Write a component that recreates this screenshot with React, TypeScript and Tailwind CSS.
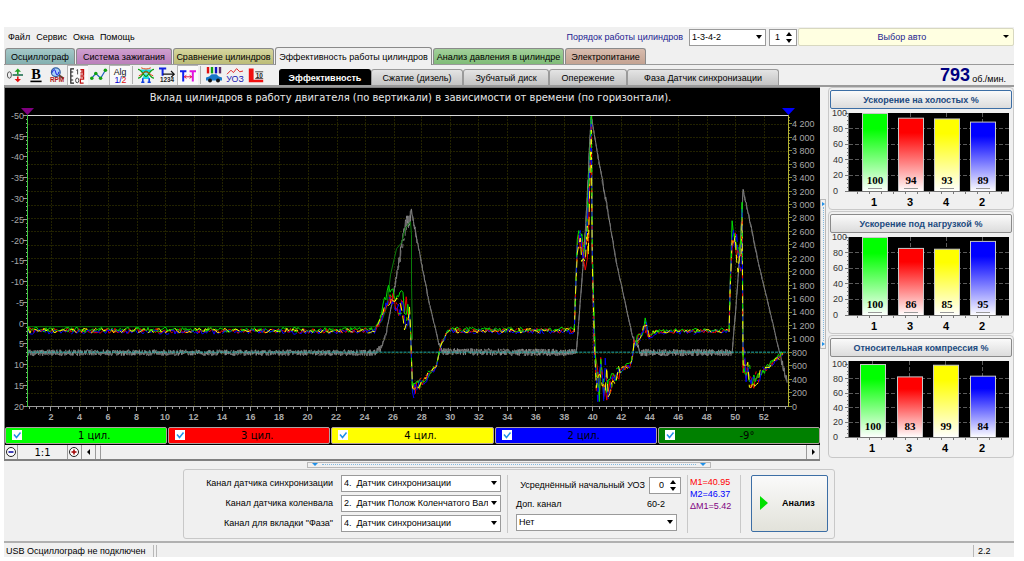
import { useState } from "react";
import type { ReactNode } from "react";

type Point = [number, number];

// Small deterministic generator, so that the traces are the same on each render
const makeRandom = (seed: number) => {
  let s = seed;
  return () => {
    s = (s * 16807) % 2147483647;
    return s / 2147483647 - 0.5;
  };
};

// Each knot: x, y and the noise amplitude of the stretch that follows it
type Knot = [number, number, number];

const trace = (knots: Knot[], seed: number, step: number) => {
  const random = makeRandom(seed);
  const points: Point[] = [];
  for (let i = 0; i < knots.length - 1; i++) {
    const [x0, y0, noise] = knots[i];
    const [x1, y1] = knots[i + 1];
    const count = Math.max(1, Math.round((x1 - x0) / step));
    for (let k = 0; k < count; k++) {
      const f = k / count;
      const y = y0 + (y1 - y0) * f + random() * noise;
      points.push([x0 + (x1 - x0) * f, Math.min(406, Math.max(116, y))]);
    }
  }
  const last = knots[knots.length - 1];
  points.push([last[0], last[1]]);
  return points.map(([x, y]) => `${x.toFixed(1)},${y.toFixed(1)}`).join(" ");
};

const cylinderKnots: Knot[] = [
  [27, 331, 5],
  [374, 331, 4],
  [378, 324, 6],
  [384, 310, 10],
  [388, 300, 12],
  [391, 299, 14],
  [398, 307, 20],
  [404, 314, 34],
  [409, 314, 40],
  [410, 330, 4],
  [411, 360, 4],
  [412, 390, 18],
  [416, 388, 12],
  [422, 382, 8],
  [429, 374, 5],
  [436, 366, 2],
  [440, 347, 8],
  [444, 340, 4],
  [447, 331, 5],
  [574, 331, 2],
  [575, 300, 6],
  [577, 238, 12],
  [580, 232, 20],
  [583, 246, 24],
  [585, 256, 30],
  [587, 236, 60],
  [588, 220, 60],
  [590, 150, 6],
  [591, 116, 0],
  [592, 250, 10],
  [594, 345, 40],
  [596, 382, 50],
  [602, 380, 50],
  [605, 376, 40],
  [608, 390, 18],
  [613, 380, 14],
  [620, 371, 6],
  [631, 364, 4],
  [634, 345, 12],
  [640, 337, 8],
  [645, 326, 16],
  [649, 336, 5],
  [656, 332, 4],
  [729, 331, 2],
  [730, 290, 8],
  [732, 234, 20],
  [735, 232, 24],
  [738, 250, 30],
  [741, 250, 40],
  [742, 205, 4],
  [743, 365, 40],
  [746, 368, 28],
  [751, 382, 18],
  [758, 378, 12],
  [766, 369, 5],
  [783, 354, 0],
];

const shifted = (dy: number, peak: number): Knot[] =>
  cylinderKnots.map(([x, y, n]) => [x, y < 270 ? y + peak : y + dy, n]);

// The first cylinder runs ahead of the others on the slow acceleration
const firstCylinder = shifted(-1, -4).map(([x, y, n]): Knot => [
  x,
  x > 380 && x < 409 ? y - 9 : y,
  n,
]);

const rpmKnots: Knot[] = [
  [27, 353, 6],
  [376, 353, 7],
  [381, 347, 4],
  [386, 332, 3],
  [392, 300, 6],
  [398, 265, 16],
  [404, 232, 18],
  [408, 218, 20],
  [411, 212, 6],
  [418, 248, 4],
  [428, 300, 2],
  [438, 342, 5],
  [442, 352, 7],
  [576, 353, 2],
  [579, 315, 2],
  [583, 262, 12],
  [587, 200, 12],
  [589, 150, 2],
  [591, 116, 2],
  [598, 158, 6],
  [607, 208, 4],
  [616, 262, 2],
  [633, 340, 8],
  [641, 353, 7],
  [732, 353, 2],
  [736, 305, 2],
  [740, 250, 3],
  [743, 190, 4],
  [750, 222, 4],
  [758, 262, 2],
  [770, 312, 2],
  [780, 355, 8],
  [787, 383, 0],
];

const advancePoints =
  "27,327 374,327 381,322 386,308 390,275 396,249 401,243 405,228 410,222 411,235 411,283 412,340";

const traces = [
  { color: "#8c8c8c", dash: "none", points: trace(rpmKnots, 77, 0.5) },
  { color: "#6c6c6c", dash: "6 3", points: trace(rpmKnots, 91, 0.6) },
  { color: "#0a7b0a", dash: "none", points: advancePoints },
  { color: "#f00000", dash: "none", points: trace(shifted(0, 6), 11, 1.5) },
  { color: "#00e000", dash: "none", points: trace(firstCylinder, 23, 1.5) },
  { color: "#0000ff", dash: "14 3", points: trace(shifted(1, 4), 37, 1.5) },
  { color: "#ffff00", dash: "8 5", points: trace(shifted(0, 14), 53, 2) },
  { color: "#f00000", dash: "3 15", points: trace(shifted(0, 8), 61, 2) },
  { color: "#00e000", dash: "4 20", points: trace(shifted(-1, -2), 67, 2) },
];

const range = (n: number) => Array.from({ length: n }, (_, i) => i);

const TimeChart = () => (
  <svg viewBox="4 88 816 339" className="block w-full bg-black">
    <text
      x="410"
      y="101"
      fontSize="10"
      fill="#e8e8e8"
      textAnchor="middle"
      className="font-['DejaVu_Sans',Verdana,sans-serif]"
    >
      Вклад цилиндров в работу двигателя (по вертикали) в зависимости от времени
      (по горизонтали).
    </text>
    <g stroke="#222200" strokeDasharray="2 1" shapeRendering="crispEdges">
      {range(26).map((i) => {
        const x = Math.round(50 + i * 28.55) + 0.5;
        return <line key={i} x1={x} x2={x} y1="116" y2="406" />;
      })}
      {range(21).map((i) => {
        const y = Math.round(393 - i * 13.46) + 0.5;
        return <line key={i} x1="27" x2="788" y1={y} y2={y} />;
      })}
    </g>
    <g fill="none" strokeWidth="1" strokeLinejoin="bevel">
      {traces.map((t, i) => (
        <polyline
          key={i}
          points={t.points}
          stroke={t.color}
          strokeDasharray={t.dash}
        />
      ))}
    </g>
    <line
      x1="27"
      x2="788"
      y1="352.5"
      y2="352.5"
      stroke="#20b2aa"
      strokeDasharray="3 1"
    />
    <g shapeRendering="crispEdges" stroke="#9a9a9a">
      <line x1="27" x2="788" y1="115.5" y2="115.5" stroke="#d8d8d8" />
      <line x1="27" x2="788" y1="406.5" y2="406.5" />
      {range(71).map((i) => (
        <line
          key={i}
          x1={i % 5 === 0 ? 22 : 25}
          x2="26"
          y1={115.5 + i * 4.157}
          y2={115.5 + i * 4.157}
        />
      ))}
      {range(107).map((i) => (
        <line
          key={i}
          y1="407"
          y2={i % 4 === 3 ? 411 : 409}
          x1={28.6 + i * 7.137}
          x2={28.6 + i * 7.137}
        />
      ))}
      {range(87).map((i) => (
        <line
          key={i}
          x1="788"
          x2={i % 4 === 0 ? 792 : 790}
          y1={406.5 - i * 3.365}
          y2={406.5 - i * 3.365}
          stroke="#8a8a30"
        />
      ))}
      <line x1="26.5" x2="26.5" y1="115" y2="407" stroke="#3cc83c" />
      <line x1="788.5" x2="788.5" y1="115" y2="407" stroke="#b4b432" />
    </g>
    <polygon points="20,108 33,108 26.5,115" fill="#800080" />
    <polygon points="782,108 795,108 788.5,115" fill="#0000ff" />
    <g fontSize="9" fill="#a8a8a8">
      {range(15).map((i) => (
        <text key={i} x="23" y={119 + i * 20.79} textAnchor="end">
          {i * 5 - 50}
        </text>
      ))}
      {range(22).map((i) => (
        <text key={i} x="792" y={410 - i * 13.46}>
          {i < 5
            ? i * 200
            : `${Math.floor(i / 5)} ${String((i % 5) * 200).padStart(3, "0")}`}
        </text>
      ))}
      {range(26).map((i) => (
        <text
          key={i}
          x={50 + i * 28.55}
          y="420"
          textAnchor="middle"
          fontWeight="bold"
        >
          {i * 2 + 2}
        </text>
      ))}
    </g>
  </svg>
);

type BarChartProps = {
  id: string;
  title: string;
  values: number[];
  top: number;
  zero: number;
  bars: number[];
  active?: boolean;
};

const barColors = ["#00ff00", "#ff0000", "#ffff00", "#0000ff"];
const cylinderOrder = [1, 3, 4, 2];

const BarChart = ({
  id,
  title,
  values,
  top,
  zero,
  bars,
  active,
}: BarChartProps) => {
  const scale = (v: number) => zero - ((zero - top) * v) / 100;
  return (
    <section className="rounded-sm border border-[#c8c8c8] px-px pt-0.5">
      <button
        className={`block h-[19px] w-full rounded-xs border bg-linear-to-b from-[#fafafa] to-[#dcdcdc] font-bold leading-4 text-[#1c4a80] ${
          active ? "border-[#3c6ea5]" : "border-[#8a8a8a]"
        }`}
      >
        {title}
      </button>
      <svg viewBox="830 0 182 100" className="block w-full">
        <defs>
          {barColors.map((color, i) => (
            <linearGradient key={color} id={`${id}-${i}`} x2="0" y2="1">
              <stop offset="0.2" stopColor={color} />
              <stop offset="1" stopColor="#ffffff" />
            </linearGradient>
          ))}
        </defs>
        <rect x="849" y="4" width="160" height={zero - 4} fill="#000" />
        <g stroke="#5a5a5a" strokeDasharray="4 2" shapeRendering="crispEdges">
          {[20, 40, 60, 80].map((v) => (
            <line key={v} x1="849" x2="1009" y1={scale(v)} y2={scale(v)} />
          ))}
          {bars.map((x) => (
            <line key={x} x1={x + 12.5} x2={x + 12.5} y1="4" y2={zero} />
          ))}
        </g>
        {bars.map((x, i) => (
          <g key={x}>
            <rect
              x={x + 0.5}
              y={scale(values[i]) + 0.5}
              width="25"
              height={zero - scale(values[i])}
              fill={`url(#${id}-${i})`}
              stroke="#c8c8c8"
            />
            <text
              x={x + 13}
              y={zero - 7}
              fontSize="11"
              fontWeight="bold"
              textAnchor="middle"
              className="font-['Liberation_Serif',serif]"
            >
              {values[i]}
            </text>
            <text
              x={x + 12}
              y={zero + 15}
              fontSize="11"
              fontWeight="bold"
              textAnchor="middle"
            >
              {cylinderOrder[i]}
            </text>
            {top === 4 && (
              <rect x={x + 6} y={zero - 3} width="14" height="1" fill="#999" />
            )}
          </g>
        ))}
        <g stroke="#777" shapeRendering="crispEdges">
          <line x1="848.5" x2="848.5" y1="4" y2={zero + 1} />
          <line x1="848" x2="1009" y1={zero + 0.5} y2={zero + 0.5} />
          {range(21).map((i) => (
            <line
              key={i}
              x1={i % 4 === 0 ? 845 : 847}
              x2="848"
              y1={scale(i * 5)}
              y2={scale(i * 5)}
            />
          ))}
          {range(13).map((i) => (
            <line
              key={i}
              x1={857.5 + i * 12}
              x2={857.5 + i * 12}
              y1={zero + 1}
              y2={zero + 3}
            />
          ))}
        </g>
        <g fontSize="9" fill="#333">
          {[0, 20, 40, 60, 80, 100].map((v) => (
            <text
              key={v}
              x={v === 100 ? 847 : v === 0 ? 838 : 843}
              y={scale(v) + 3}
              textAnchor="end"
            >
              {v}
            </text>
          ))}
        </g>
      </svg>
    </section>
  );
};

type ComboProps = {
  id: string;
  options: string[];
  className: string;
};

const Combo = ({ id, options, className }: ComboProps) => (
  <span className={`relative block ${className}`}>
    <select
      id={id}
      className="block h-[17px] w-full appearance-none border border-[#9a9a9a] bg-white pl-0.5 pr-3 text-[9px] leading-[15px] text-black"
    >
      {options.map((option) => (
        <option key={option}>{option}</option>
      ))}
    </select>
    <span className="pointer-events-none absolute right-1 top-1.5 border-x-[3px] border-t-4 border-x-transparent border-t-black" />
  </span>
);

type SpinnerProps = {
  id: string;
  label?: string;
  initial: number;
  className: string;
};

const Spinner = ({ id, label, initial, className }: SpinnerProps) => {
  const [value, setValue] = useState(initial);
  return (
    <span
      className={`flex h-[17px] items-center border border-[#9a9a9a] bg-white ${className}`}
    >
      <input
        id={id}
        aria-label={label}
        value={value}
        onChange={(e) => setValue(Number(e.target.value) || 0)}
        className="h-[15px] w-0 flex-1 pr-1.5 text-right text-[9px]"
      />
      <span className="mr-1 flex flex-col gap-[3px]">
        <button
          aria-label="Больше"
          onClick={() => setValue(value + 1)}
          className="border-x-[3px] border-b-4 border-x-transparent border-b-black"
        />
        <button
          aria-label="Меньше"
          onClick={() => setValue(value - 1)}
          className="border-x-[3px] border-t-4 border-x-transparent border-t-black"
        />
      </span>
    </span>
  );
};

type ToolButtonProps = {
  label: string;
  pressed?: boolean;
  children: ReactNode;
};

const ToolButton = ({ label, pressed, children }: ToolButtonProps) => (
  <button
    aria-label={label}
    className={`h-5 w-[21px] shrink-0 ${
      pressed ? "border-l border-t border-[#b4b4b4] bg-[#fafafa]" : ""
    }`}
  >
    <svg viewBox="0 0 20 20" className="mx-auto block h-4 w-4 overflow-visible">
      {children}
    </svg>
  </button>
);

const ToolSeparator = () => (
  <span className="mx-0.5 h-[18px] w-px shrink-0 bg-[#b0b0b0]" />
);

const Toolbar = () => (
  <div className="flex h-5 w-[275px] shrink-0 items-center">
    <ToolButton label="Ноль">
      <ellipse cx="3" cy="10" rx="2.5" ry="4" fill="none" stroke="#333" />
      <path d="M7 10h13" stroke="#207050" strokeWidth="2" />
      <path d="M13.500 2l4 4h-3v3h-2V6h-3z" fill="#20a020" />
      <path d="M13.500 19l-4-4h3v-3h2v3h3z" fill="#e01010" />
    </ToolButton>
    <ToolButton label="Жирный">
      <text
        x="10"
        y="15"
        fontSize="18"
        fontWeight="bold"
        textAnchor="middle"
        className="font-['Liberation_Serif',serif]"
      >
        B
      </text>
      <path d="M3 18h14" stroke="#000" strokeWidth="2" />
    </ToolButton>
    <ToolButton label="Обороты">
      <circle
        cx="8.500"
        cy="6.500"
        r="5.500"
        fill="#a8d0f8"
        stroke="#3060a0"
        strokeWidth="1.500"
      />
      <path
        d="M4 7c2-5 3-5 4.500 0s2.500 3 4-1"
        fill="none"
        stroke="#0000e0"
        strokeWidth="1.200"
      />
      <path d="M12.500 10.500l6 4" stroke="#604030" strokeWidth="2.500" />
      <text
        x="10"
        y="19"
        fontSize="8"
        fontWeight="bold"
        fill="#b01818"
        textAnchor="middle"
      >
        RPM
      </text>
    </ToolButton>
    <ToolButton label="Шкала" pressed>
      <path
        d="M5 1H1v18h4M1 5h3M1 10h3M1 15h3"
        fill="none"
        stroke="#222"
        strokeWidth="1.500"
      />
      <path d="M8 3l1.500-1v6" fill="none" stroke="#222" />
      <ellipse cx="9" cy="15.500" rx="2" ry="3" fill="none" stroke="#222" />
      {/* column of red digits */}
      <path
        d="M13 2h4v4h-4M17 6v3h-4M14 4h3M13 11h4v3h-4v5h4"
        fill="none"
        stroke="#c01010"
        strokeWidth="1.500"
      />
    </ToolButton>
    <ToolButton label="Точки">
      <path
        d="M1 14l5-6 6 6 6-10"
        fill="none"
        stroke="#2060c0"
        strokeWidth="1.500"
      />
      <g fill="#10a010">
        <circle cx="1" cy="14" r="2.200" />
        <circle cx="6" cy="8" r="2.200" />
        <circle cx="12" cy="14" r="2.200" />
        <circle cx="18" cy="4" r="2.200" />
      </g>
    </ToolButton>
    <ToolButton label="Алгоритм" pressed>
      <text x="10" y="9" fontSize="11" fill="#111" textAnchor="middle">
        Alg
      </text>
      <text x="3" y="19" fontSize="11" fill="#0000d0">
        1/
      </text>
      <text x="12" y="19" fontSize="11" fill="#e01010">
        2
      </text>
    </ToolButton>
    <ToolSeparator />
    <ToolButton label="Датчик">
      <path d="M3 3h14l-3 5H6zM5 15l3-6h4l3 6z" fill="#20d8e0" />
      <path
        d="M0 3c5 0 7 9 10 9s5-9 10-9M0 14c5 0 7-9 10-9s5 9 10 9"
        fill="none"
        stroke="#10a010"
        strokeWidth="1.500"
      />
      <path
        d="M1 11c4-1 5-5 9-5s5 4 9 5M4 1c4 2 8 2 12 0"
        fill="none"
        stroke="#e04010"
        strokeWidth="1.200"
      />
      <path
        d="M6 19v-5M14 19v-5M4 19h4M12 19h4"
        stroke="#1040e0"
        strokeWidth="2"
      />
    </ToolButton>
    <ToolButton label="Порядок">
      <path d="M0 2h9M4.500 2v9" stroke="#1020e0" strokeWidth="2.500" />
      <path
        d="M5 9h14M15 5l4 4-4 4"
        fill="none"
        stroke="#111"
        strokeWidth="1.500"
      />
      <text
        x="10"
        y="19"
        fontSize="8"
        fontWeight="bold"
        fill="#222"
        textAnchor="middle"
      >
        1234
      </text>
    </ToolButton>
    <ToolButton label="Интервал" pressed>
      <path d="M0 4h8M4 4v13" stroke="#1020f0" strokeWidth="2.500" />
      <path d="M12 4h8M16 4v13" stroke="#e010e0" strokeWidth="2.500" />
      <path
        d="M5 11h10M8 9l-2.500 2L8 13M12 9l2.500 2-2.500 2"
        fill="none"
        stroke="#e01040"
        strokeWidth="1.200"
      />
    </ToolButton>
    <ToolSeparator />
    <ToolButton label="Цилиндры">
      <path d="M2.500 0v8" stroke="#e01010" strokeWidth="3" />
      <path d="M7.500 0v8" stroke="#10a010" strokeWidth="3" />
      <path d="M12.500 0v8" stroke="#1010c0" strokeWidth="3" />
      <path d="M17.500 0v8" stroke="#603060" strokeWidth="3" />
      <path d="M0 17v-4l4-1 3-3h6l3 3 4 1v4z" fill="#1878c8" />
      <circle cx="5" cy="17" r="2.500" fill="#111" />
      <circle cx="15" cy="17" r="2.500" fill="#111" />
    </ToolButton>
    <ToolButton label="УОЗ">
      <path
        d="M0 9l5-5 3 3 4-5 4 4 4-1"
        fill="none"
        stroke="#e02020"
        strokeWidth="1.200"
      />
      <text x="10" y="19" fontSize="11" fill="#1818b0" textAnchor="middle">
        УОЗ
      </text>
    </ToolButton>
    <ToolButton label="Отсечка">
      <path d="M1 2h6v14h12v3H1z" fill="#f01010" />
      <path d="M9 6h10M9 14.500h10" stroke="#222" />
      <text
        x="14"
        y="13.500"
        fontSize="8"
        fontWeight="bold"
        fill="#222"
        textAnchor="middle"
      >
        10
      </text>
    </ToolButton>
  </div>
);

const mainTabs = [
  { name: "Осциллограф", look: "w-[70px] from-[#a4c8c8] to-[#84b0b0]" },
  { name: "Система зажигания", look: "w-[96px] from-[#cf9fcf] to-[#bb80bb]" },
  { name: "Сравнение цилиндров", look: "w-[101px] from-[#d6d69e] to-[#bcbc78]" },
  { name: "Эффективность работы цилиндров", look: "w-[157px]" },
  {
    name: "Анализ давления в цилиндре",
    look: "w-[131px] from-[#a2d09a] to-[#80bc78]",
  },
  { name: "Электропитание", look: "w-[81px] from-[#d8bcae] to-[#c4a392]" },
];

const viewTabs = [
  { name: "Эффективность", width: "w-[92px]" },
  { name: "Сжатие (дизель)", width: "w-[92px]" },
  { name: "Зубчатый диск", width: "w-[86px]" },
  { name: "Опережение", width: "w-[78px]" },
  { name: "Фаза Датчик синхронизации", width: "w-[152px]" },
];

const legend = [
  { name: "1 цил.", color: "bg-[#00ff00]" },
  { name: "3 цил.", color: "bg-[#ff0000]" },
  { name: "4 цил.", color: "bg-[#ffff00]" },
  { name: "2 цил.", color: "bg-[#0000ff]" },
  { name: "-9°", color: "bg-[#008000]" },
];

const channels = [
  {
    id: "sync",
    label: "Канал датчика синхронизации",
    value: "4.\u00a0 Датчик синхронизации",
  },
  {
    id: "crank",
    label: "Канал датчика коленвала",
    value: "2.\u00a0 Датчик Полож Коленчатого Вал",
  },
  {
    id: "phase",
    label: 'Канал для вкладки "Фаза"',
    value: "4.\u00a0 Датчик синхронизации",
  },
];

const App = () => {
  const [mainTab, setMainTab] = useState(3);
  const [viewTab, setViewTab] = useState(0);

  return (
    <div className="bg-white pb-1 pl-1 pr-2.5 pt-[27px] font-['Liberation_Sans',Arial,sans-serif] text-[9px] leading-3 text-black">
      <div className="bg-[#f0f0f0]">
        <header className="flex h-5 items-center">
          <nav className="flex gap-1.5 pl-1">
            {["Файл", "Сервис", "Окна", "Помощь"].map((item) => (
              <button key={item}>{item}</button>
            ))}
          </nav>
          <label htmlFor="order" className="ml-auto mr-1.5 text-[#1c1c90]">
            Порядок работы цилиндров
          </label>
          <Combo id="order" options={["1-3-4-2"]} className="w-[77px]" />
          <Spinner
            id="first"
            label="Первый цилиндр"
            initial={1}
            className="ml-[3px] w-[28px]"
          />
          <button className="relative ml-px h-[18px] w-[216px] rounded-xs border border-[#d8d8c0] bg-[#ffffe1] pr-2 text-[#1c1c90]">
            Выбор авто
            <span className="absolute right-1 top-1.5 border-x-[3px] border-t-[3px] border-x-transparent border-t-black" />
          </button>
        </header>

        <div className="flex h-[18px] items-end gap-px border-b border-[#9a9a9a] pl-px">
          {mainTabs.map((tab, i) => (
            <button
              key={tab.name}
              onClick={() => setMainTab(i)}
              className={`whitespace-nowrap rounded-t-[3px] border border-b-0 border-[#8a8a8a] bg-linear-to-b ${
                tab.look
              } ${i === mainTab ? "-mb-px h-[18px] bg-[#f0f0f0]" : "h-4"}`}
            >
              {tab.name}
            </button>
          ))}
        </div>

        <div className="flex h-[22px] items-end border-b-2 border-[#9a9a9a]">
          <Toolbar />
          <div className="flex">
            {viewTabs.map((tab, i) => (
              <button
                key={tab.name}
                onClick={() => setViewTab(i)}
                className={`h-4 rounded-t-[3px] border border-b-0 ${tab.width} ${
                  i === viewTab
                    ? "border-black bg-black font-bold text-white"
                    : "border-[#9a9a9a] bg-linear-to-b from-[#e4e4e4] to-[#c4c4c4]"
                }`}
              >
                {tab.name}
              </button>
            ))}
          </div>
          <p className="ml-auto flex items-end gap-0.5 pr-2">
            <strong className="text-lg leading-5 text-[#000080]">793</strong>
            об./мин.
          </p>
        </div>

        <main className="flex">
          <div className="flex min-w-0 flex-1 flex-col border-b-2 border-l border-t border-[#808080]">
            <TimeChart />
            <div className="flex gap-px bg-black pb-px">
              {legend.map((item) => (
                <label
                  key={item.name}
                  className={`flex h-[17px] flex-1 items-center rounded-xs border border-[#b0a0a0] pl-1.5 ${item.color}`}
                >
                  <input
                    type="checkbox"
                    defaultChecked
                    className="peer sr-only"
                  />
                  <svg
                    viewBox="0 0 10 10"
                    className="size-2.5 bg-white peer-checked:[&>path]:opacity-100 [&>path]:opacity-0"
                  >
                    <path
                      d="M2 4.500l2.500 3L8.500 2.500"
                      fill="none"
                      stroke="#2090e8"
                      strokeWidth="1.500"
                    />
                  </svg>
                  <span className="flex-1 pt-px text-center font-['DejaVu_Sans',Verdana,sans-serif] text-[10px] leading-[14px]">
                    {item.name}
                  </span>
                </label>
              ))}
            </div>
            <div className="flex h-[14px] items-stretch">
              <button
                aria-label="Уменьшить"
                className="w-[13px] border-r border-[#9a9a9a]"
              >
                <svg viewBox="0 0 12 12" className="size-3">
                  <circle cx="6" cy="6" r="4.500" fill="#fff" stroke="#222" />
                  <path d="M3.500 6h5" stroke="#0000a0" strokeWidth="1.500" />
                </svg>
              </button>
              <output className="w-[50px] border-r border-[#9a9a9a] text-center font-['DejaVu_Sans',Verdana,sans-serif] text-[10px] leading-[15px]">
                1:1
              </output>
              <button
                aria-label="Увеличить"
                className="w-[14px] border-r border-[#9a9a9a]"
              >
                <svg viewBox="0 0 12 12" className="size-3">
                  <circle cx="6" cy="6" r="4.500" fill="#fff" stroke="#222" />
                  <path
                    d="M3.500 6h5M6 3.500v5"
                    stroke="#a00000"
                    strokeWidth="1.500"
                  />
                </svg>
              </button>
              <button
                aria-label="Влево"
                className="flex w-[14px] items-center justify-center border-r border-[#9a9a9a]"
              >
                <span className="border-y-[3px] border-r-[3px] border-y-transparent border-r-black" />
              </button>
              <span className="ml-1 flex-1 border-l border-t border-l-[#9a9a9a] border-t-white" />
              <button
                aria-label="Вправо"
                className="flex w-[14px] items-center justify-center border-x border-[#9a9a9a]"
              >
                <span className="border-y-[3px] border-l-[3px] border-y-transparent border-l-black" />
              </button>
            </div>
          </div>

          <div className="flex w-2 items-center justify-start">
            <div className="flex h-[150px] w-1.5 flex-col items-center justify-between border border-[#b8b8b8] py-0.5">
              <span className="border-y-2 border-l-[3px] border-y-transparent border-l-[#2090e8]" />
              <span className="my-px flex-1 border-l border-dotted border-[#80b8e0]" />
              <span className="border-y-2 border-l-[3px] border-y-transparent border-l-[#2090e8]" />
            </div>
          </div>

          <aside className="flex w-[186px] flex-col gap-px">
            <BarChart
              id="idle"
              title="Ускорение на холостых %"
              values={[100, 94, 93, 89]}
              top={4}
              zero={82}
              bars={[862, 898, 934, 970]}
              active
            />
            <BarChart
              id="load"
              title="Ускорение под нагрузкой %"
              values={[100, 86, 85, 95]}
              top={4}
              zero={82}
              bars={[862, 898, 934, 970]}
            />
            <BarChart
              id="compression"
              title="Относительная компрессия %"
              values={[100, 83, 99, 84]}
              top={7}
              zero={80}
              bars={[860, 897, 933, 970]}
            />
          </aside>
        </main>

        <div className="flex h-2 items-center justify-center">
          <div className="flex h-1.5 w-[404px] items-center gap-1 border border-[#b8b8b8] px-1">
            <span className="border-x-[3px] border-t-[3px] border-x-transparent border-t-[#2090e8]" />
            <span className="flex-1 border-t border-dotted border-[#80b8e0]" />
            <span className="border-x-[3px] border-t-[3px] border-x-transparent border-t-[#2090e8]" />
          </div>
        </div>

        <div className="flex justify-center pb-0.5">
          <div className="flex h-[70px] w-[652px] items-start justify-end rounded-[3px] border border-[#c8c8c8] py-[5px] pr-1.5">
            <div className="grid grid-cols-[auto_160px] items-center gap-x-2 gap-y-[3px] text-right">
              {channels.map((channel) => (
                <div key={channel.id} className="contents">
                  <label htmlFor={channel.id}>{channel.label}</label>
                  <Combo
                    id={channel.id}
                    options={[channel.value]}
                    className="text-left"
                  />
                </div>
              ))}
            </div>
            <div className="ml-1.5 flex h-[58px] w-[180px] flex-col gap-1 border-l border-[#c8c8c8] pl-2 pr-1.5 pt-0.5">
              <div className="flex items-center justify-end gap-1">
                <label htmlFor="angle">Усреднённый начальный УОЗ</label>
                <Spinner id="angle" initial={0} className="w-[32px]" />
              </div>
              <div className="flex justify-between pr-4">
                <label htmlFor="extra">Доп. канал</label>
                <span>60-2</span>
              </div>
              <Combo id="extra" options={["Нет"]} className="mr-1" />
            </div>
            <div className="h-[58px] w-[54px] border-x border-[#c8c8c8] pl-0.5 pt-px">
              <p className="text-[#ff0000]">M1=40.95</p>
              <p className="text-[#0000ff]">M2=46.37</p>
              <p className="text-[#800080]">ΔM1=5.42</p>
            </div>
            <button className="ml-2.5 flex h-[57px] w-[77px] items-center gap-3.5 rounded-xs border border-[#3c6ea5] bg-linear-to-b from-[#fafafa] to-[#e2e2da] pl-2 font-bold">
              <span className="border-y-[7px] border-l-8 border-y-transparent border-l-[#00e000]" />
              Анализ
            </button>
          </div>
        </div>

        <footer className="flex h-4 gap-0.5 border-t-2 border-[#b0b0b0] pt-0.5">
          <span className="w-[150px] border-r border-[#b8b8b8] pl-0.5">
            USB Осциллограф не подключен
          </span>
          <span className="flex-1 border-x border-[#b8b8b8]" />
          <span className="w-[38px] pl-0.5">2.2</span>
        </footer>
      </div>
    </div>
  );
};

export default App;
